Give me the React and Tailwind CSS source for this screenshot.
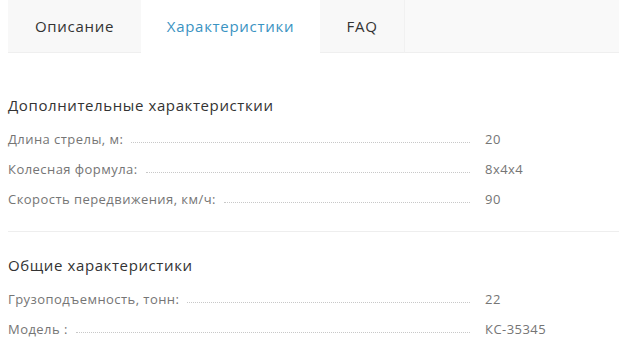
export default function App() {
  const groups = [
    {
      title: "Дополнительные характеристкии",
      rows: [
        ["Длина стрелы, м:", "20"],
        ["Колесная формула:", "8x4x4"],
        ["Скорость передвижения, км/ч:", "90"],
      ],
    },
    {
      title: "Общие характеристики",
      rows: [
        ["Грузоподъемность, тонн:", "22"],
        ["Модель :", "КС-35345"],
      ],
    },
  ];

  return (
    <div className="w-[619px] h-[361px] bg-white overflow-hidden pl-2 font-['Open_Sans',sans-serif]">
      <div className="flex h-[53px] text-[15px] tracking-[0.7px]">
        <div className="w-[133px] bg-[#f8f8f8] border-b border-[#efefef] flex items-center justify-center text-[#333]">
          Описание
        </div>
        <div className="w-[179px] bg-white flex items-center justify-center text-[#3a93c2]">
          Характеристики
        </div>
        <div className="w-[84px] bg-[#f8f8f8] border-b border-[#efefef] flex items-center justify-center text-[#333]">
          FAQ
        </div>
        <div className="flex-1 bg-[#f9f9f9] border-l border-[#f1f1f1] border-b border-b-[#efefef]"></div>
      </div>

      {groups.map((g, gi) => (
        <div key={gi} className={gi > 0 ? "border-t border-[#eeeeee] pt-[22px]" : "pt-[41px] pb-[16px]"}>
          <div className="text-[15px] tracking-[0.6px] text-[#333] h-[22px] leading-[22px] mb-[9px]">{g.title}</div>
          {g.rows.map(([k, v], i) => (
            <div key={i} className="flex items-center h-[30px] text-[13px] tracking-[0.45px] text-[#757575]">
              <div className="w-[462px] flex items-center">
                <span className="whitespace-nowrap">{k}</span>
                <span className="flex-1 ml-2 border-b border-dotted border-[#c8c8c8] translate-y-[2px]"></span>
              </div>
              <span className="ml-[15px]">{v}</span>
            </div>
          ))}
        </div>
      ))}
    </div>
  );
}
